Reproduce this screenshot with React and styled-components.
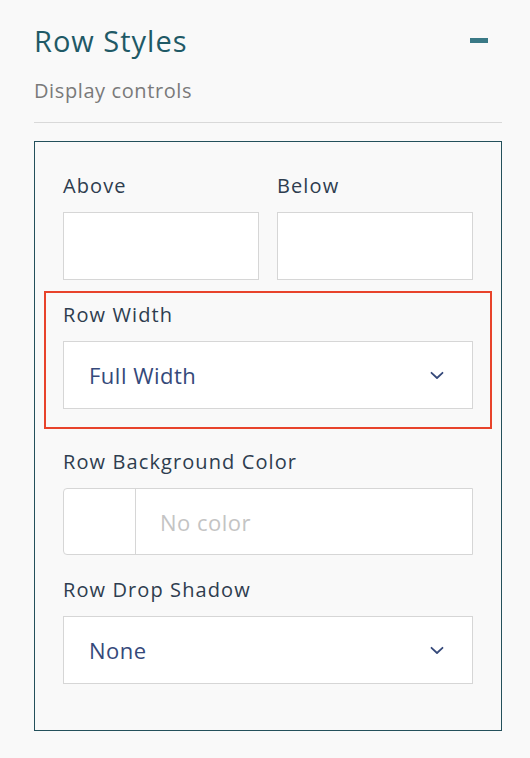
import React from 'react';
import styled, { createGlobalStyle } from 'styled-components';

const GlobalStyle = createGlobalStyle`
  html, body {
    margin: 0;
    padding: 0;
    background: #f9f9f9;
  }
  body {
    font-family: "Open Sans", Lato, sans-serif;
  }
`;

const Panel = styled.div`
  padding: 20px 28px 25px 34px;
`;

const Header = styled.div`
  display: flex;
  align-items: center;
  justify-content: space-between;
  height: 40px;
`;

const Title = styled.h2`
  margin: 0;
  font-size: 29px;
  font-weight: 400;
  letter-spacing: 1px;
  color: #1f5966;
`;

const Collapse = styled.button`
  border: 0;
  padding: 0;
  margin-right: 14px;
  width: 18px;
  height: 5px;
  background: #3a7986;
  cursor: pointer;
`;

const Subtitle = styled.div`
  margin-top: 19px;
  font-size: 20px;
  line-height: 24px;
  letter-spacing: 0.6px;
  color: #7a7a7a;
  padding-bottom: 19px;
  border-bottom: 1px solid #d9d9d9;
`;

const Box = styled.div`
  margin-top: 18px;
  border: 1px solid #23505b;
  padding: 32px 28px 46px 28px;
`;

const Pair = styled.div`
  display: grid;
  grid-template-columns: 1fr 1fr;
  column-gap: 18px;
`;

const Field = styled.div`
  margin-top: ${(p) => p.$top ?? 0}px;
  ${(p) =>
    p.$highlight &&
    `
    margin-left: -19px;
    margin-right: -19px;
    padding: 10px 17px 18px 17px;
    border: 2px solid #e8432b;
  `}
`;

const Label = styled.div`
  font-size: 20px;
  line-height: 24px;
  letter-spacing: 1.1px;
  color: #2e3d4f;
  margin-bottom: 14px;
`;

const TextBox = styled.div`
  height: 66px;
  background: #fff;
  border: 1px solid #d6d6d6;
`;

const Select = styled.div`
  height: 66px;
  background: #fff;
  border: 1px solid #d6d6d6;
  display: flex;
  align-items: center;
  justify-content: space-between;
  padding: 0 28px 0 25px;
  font-size: 22px;
  letter-spacing: 0.5px;
  color: #35497a;
`;

const ColorInput = styled.div`
  height: 65px;
  background: #fff;
  border: 1px solid #d6d6d6;
  border-radius: 4px 0 0 4px;
  display: flex;
`;

const Swatch = styled.div`
  width: 71px;
  border-right: 1px solid #d6d6d6;
`;

const Placeholder = styled.div`
  display: flex;
  align-items: center;
  padding-left: 24px;
  font-size: 22px;
  letter-spacing: 0.5px;
  color: #c4c4c4;
`;

const Chevron = () => (
  <svg width="14" height="9" viewBox="0 0 14 9" fill="none">
    <path d="M1.5 1.8 L7 7 L12.5 1.8" stroke="#35497a" strokeWidth="1.8" strokeLinecap="round" strokeLinejoin="round" />
  </svg>
);

export default function App() {
  return (
    <>
      <GlobalStyle />
      <Panel>
        <Header>
          <Title>Row Styles</Title>
          <Collapse aria-label="Collapse" />
        </Header>
        <Subtitle>Display controls</Subtitle>
        <Box>
          <Pair>
            <Field>
              <Label>Above</Label>
              <TextBox />
            </Field>
            <Field>
              <Label>Below</Label>
              <TextBox />
            </Field>
          </Pair>
          <Field $highlight $top={11}>
            <Label>Row Width</Label>
            <Select>
              Full Width
              <Chevron />
            </Select>
          </Field>
          <Field $top={21}>
            <Label>Row Background Color</Label>
            <ColorInput>
              <Swatch />
              <Placeholder>No color</Placeholder>
            </ColorInput>
          </Field>
          <Field $top={23}>
            <Label>Row Drop Shadow</Label>
            <Select>
              None
              <Chevron />
            </Select>
          </Field>
        </Box>
      </Panel>
    </>
  );
}
